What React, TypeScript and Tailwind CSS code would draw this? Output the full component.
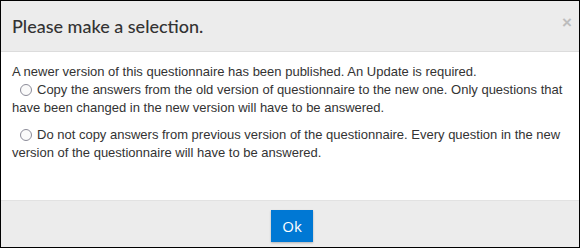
function Radio() {
  return (
    <input
      type="radio"
      name="choice"
      className="appearance-none inline-block ml-[8px] mr-[5px] w-[12px] h-[12px] rounded-full border-[1.5px] border-[#8c8c99] bg-[#fafafa] align-[-2px] checked:bg-[radial-gradient(circle,#555_35%,#fafafa_40%)]"
    />
  );
}

export default function App() {
  return (
    <div className="w-[580px] h-[248px] border border-black bg-white flex flex-col font-['Liberation_Sans',Arial,sans-serif] text-[#333]">
      {/* header */}
      <div className="h-[51px] shrink-0 bg-[#ececec] border-b border-[#dcdcdc] flex items-center justify-between pl-[11px] pr-[2px]">
        <h4 className="font-['Lato',sans-serif] font-medium text-[18px] text-[#333] leading-none">
          Please make a selection.
        </h4>
        <button className="text-[17px] font-bold text-[#bdbdbd] leading-none w-[20px] -mt-[8px]">×</button>
      </div>

      {/* body */}
      <div className="flex-1 pt-[11px] px-[11px] text-[13px] leading-[18px]">
        <p>A newer version of this questionnaire has been published. An Update is required.</p>
        <label className="block">
          <Radio />
          Copy the answers from the old version of questionnaire to the new one. Only questions that have been changed in the new version will have to be answered.
        </label>
        <label className="block mt-[9px]">
          <Radio />
          Do not copy answers from previous version of the questionnaire. Every question in the new version of the questionnaire will have to be answered.
        </label>
      </div>

      {/* footer */}
      <div className="h-[47px] shrink-0 bg-[#ececec] border-t border-[#e2e2e2] flex justify-center pt-[9px] pl-[4px]">
        <button className="w-[42px] h-[32px] bg-[#0078d4] text-white text-[15px] font-['Open_Sans',sans-serif] shadow-[0_1px_2px_rgba(0,0,0,0.25)]">
          Ok
        </button>
      </div>
    </div>
  );
}
